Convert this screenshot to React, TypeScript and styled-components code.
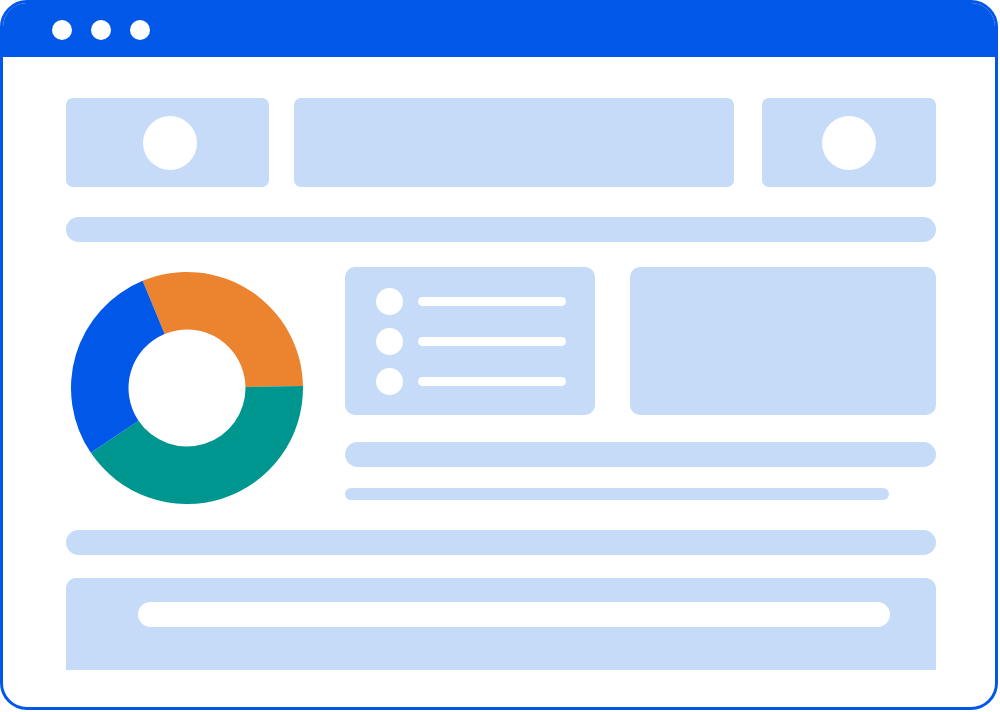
import React from "react";
import styled, { createGlobalStyle } from "styled-components";

const BLUE = "#0157e8";
const LIGHT = "#c6dbf8";

const Global = createGlobalStyle`
  html, body { margin: 0; padding: 0; background: #ffffff; }
  body { font-family: "Liberation Sans", Arial, sans-serif; }
`;

const Frame = styled.div`
  box-sizing: border-box;
  width: 998px;
  height: 710px;
  border: 3px solid ${BLUE};
  border-radius: 27px;
  overflow: hidden;
  background: #ffffff;
  display: flex;
  flex-direction: column;
`;

const TitleBar = styled.div`
  height: 54px;
  background: ${BLUE};
  display: flex;
  align-items: center;
  gap: 19px;
  padding-left: 49px;
  flex-shrink: 0;
`;

const Dot = styled.span`
  width: 20px;
  height: 20px;
  border-radius: 50%;
  background: #ffffff;
`;

const Content = styled.div`
  padding: 41px 59px 0 63px;
  display: flex;
  flex-direction: column;
`;

const TopRow = styled.div`
  display: grid;
  grid-template-columns: 203px 440px 1fr;
  column-gap: 25px;
  height: 89px;
  & > :nth-child(3) { margin-left: 3px; }
`;

const Tile = styled.div<{ $radius?: number }>`
  background: ${LIGHT};
  border-radius: ${(p) => p.$radius ?? 7}px;
  display: flex;
  align-items: center;
  justify-content: center;
`;

const Avatar = styled.span<{ $size: number }>`
  width: ${(p) => p.$size}px;
  height: ${(p) => p.$size}px;
  border-radius: 50%;
  background: #ffffff;
  flex-shrink: 0;
`;

const Bar = styled.div<{ $mt: number; $h?: number; $mr?: number }>`
  margin-top: ${(p) => p.$mt}px;
  margin-right: ${(p) => p.$mr ?? 0}px;
  height: ${(p) => p.$h ?? 25}px;
  border-radius: ${(p) => (p.$h ?? 25) / 2}px;
  background: ${LIGHT};
`;

const Middle = styled.div`
  margin-top: 25px;
  display: grid;
  grid-template-columns: 279px 1fr;
  height: 237px;
`;

const ChartCell = styled.div`
  padding: 5px 0 0 5px;
`;

const RightCol = styled.div`
  display: flex;
  flex-direction: column;
`;

const CardRow = styled.div`
  display: grid;
  grid-template-columns: 250px 306px;
  column-gap: 35px;
  height: 148px;
`;

const ListCard = styled.div`
  background: ${LIGHT};
  border-radius: 10px;
  padding: 21px 0 0 31px;
  display: flex;
  flex-direction: column;
  gap: 13px;
`;

const ListRow = styled.div`
  display: flex;
  align-items: center;
  gap: 15px;
  height: 27px;
`;

const Line = styled.span`
  width: 148px;
  height: 9px;
  border-radius: 4.5px;
  background: #ffffff;
`;

const Panel = styled.div`
  margin-top: 23px;
  height: 92px;
  background: ${LIGHT};
  border-radius: 10px 10px 0 0;
  padding: 24px 46px 0 72px;
  box-sizing: border-box;
`;

const PanelBar = styled.div`
  height: 25px;
  border-radius: 12.5px;
  background: #ffffff;
`;

const Donut = () => (
  <svg width="232" height="232" viewBox="0 0 232 232" style={{ display: "block" }}>
    <path
      d="M 71.61 8.83 A 116 116 0 0 1 231.98 113.98 L 174.49 114.98 A 58.5 58.5 0 0 0 93.61 61.95 Z"
      fill="#ec842f"
    />
    <path
      d="M 231.98 113.98 A 116 116 0 0 1 19.83 180.87 L 67.5 148.71 A 58.5 58.5 0 0 0 174.49 114.98 Z"
      fill="#009690"
    />
    <path
      d="M 19.83 180.87 A 116 116 0 0 1 71.61 8.83 L 93.61 61.95 A 58.5 58.5 0 0 0 67.5 148.71 Z"
      fill={BLUE}
    />
  </svg>
);

export default function App() {
  return (
    <>
      <Global />
      <Frame>
        <TitleBar>
          <Dot />
          <Dot />
          <Dot />
        </TitleBar>
        <Content>
          <TopRow>
            <Tile>
              <Avatar $size={54} style={{ marginLeft: 5 }} />
            </Tile>
            <Tile />
            <Tile>
              <Avatar $size={54} />
            </Tile>
          </TopRow>
          <Bar $mt={30} />
          <Middle>
            <ChartCell>
              <Donut />
            </ChartCell>
            <RightCol>
              <CardRow>
                <ListCard>
                  {[0, 1, 2].map((i) => (
                    <ListRow key={i}>
                      <Avatar $size={27} />
                      <Line />
                    </ListRow>
                  ))}
                </ListCard>
                <Tile $radius={10} />
              </CardRow>
              <Bar $mt={27} />
              <Bar $mt={21} $h={12} $mr={47} />
            </RightCol>
          </Middle>
          <Bar $mt={26} />
          <Panel>
            <PanelBar />
          </Panel>
        </Content>
      </Frame>
    </>
  );
}
